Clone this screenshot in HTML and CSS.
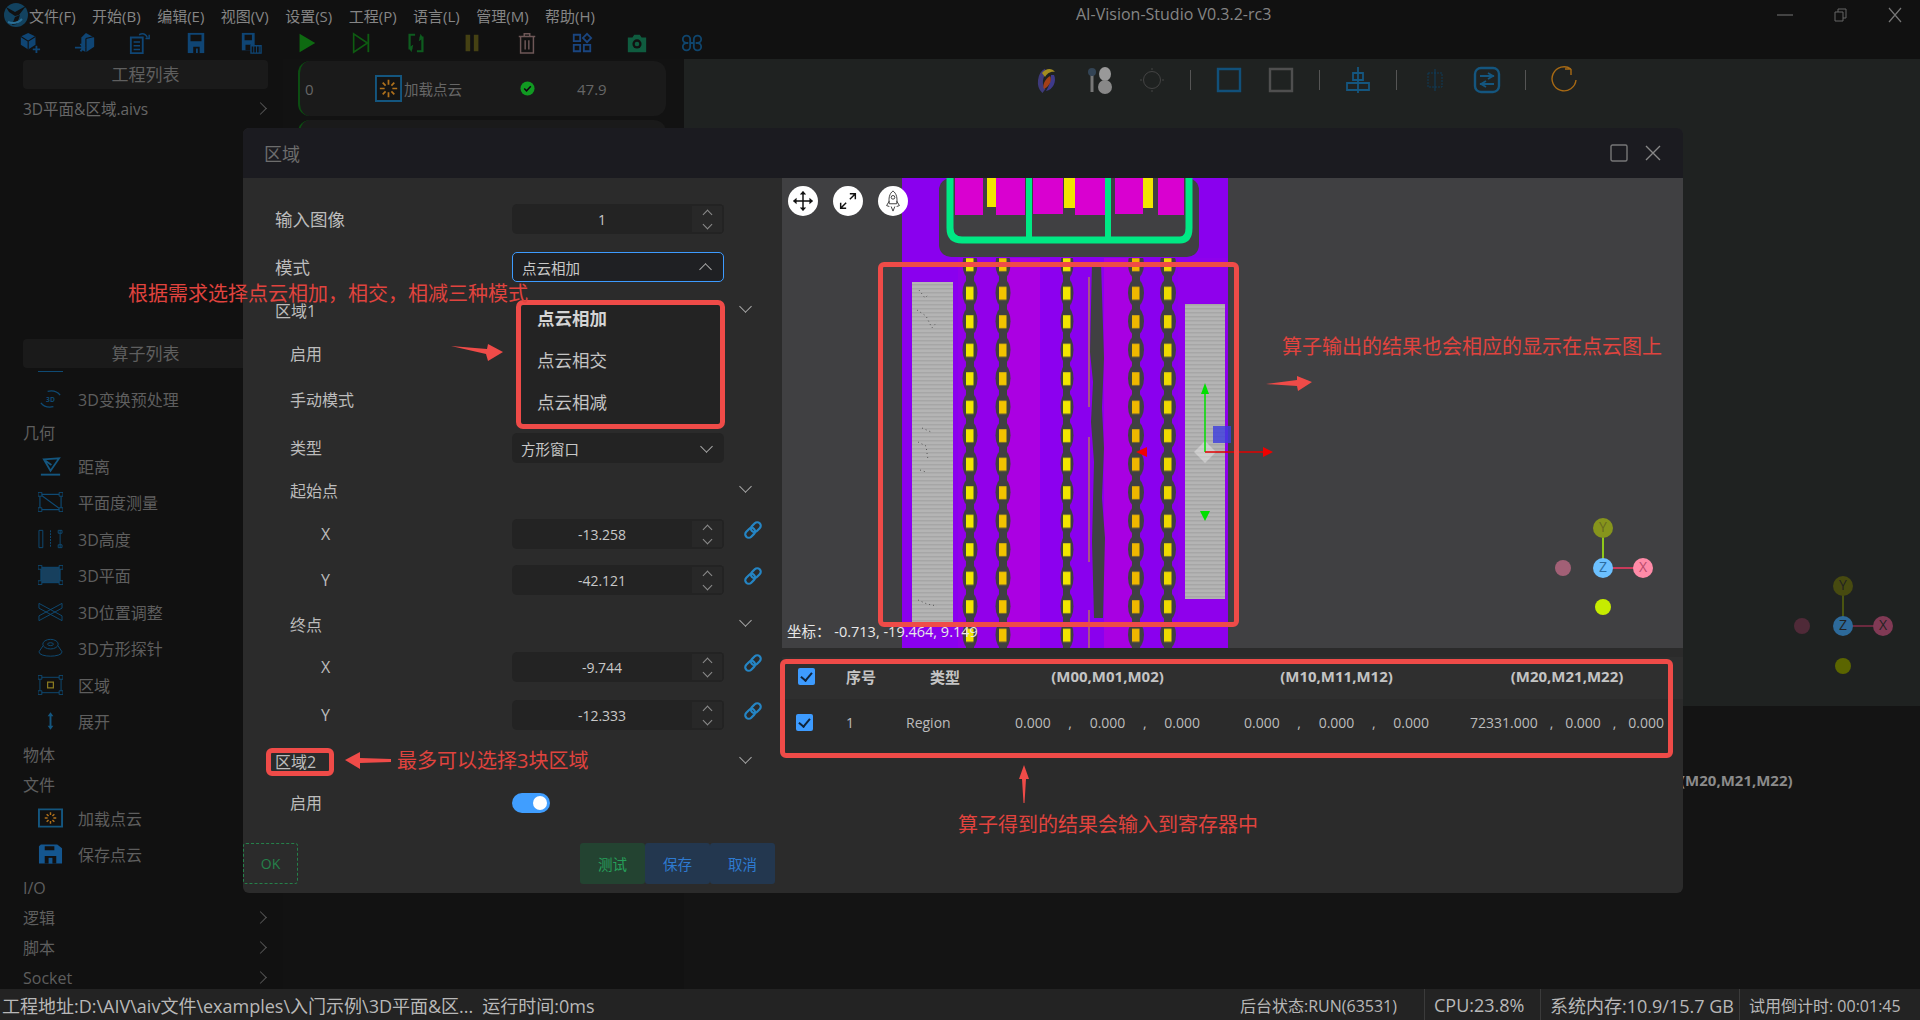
FILE: index.html
```html
<!DOCTYPE html>
<html lang="zh">
<head>
<meta charset="utf-8">
<title>AI-Vision-Studio</title>
<link rel="stylesheet" href="styles.css">
</head>
<body>
<div class="app">
  <header class="titlebar">
    <svg class="logo" viewBox="0 0 26 26"><circle cx="13" cy="13" r="12" fill="#12425f"/><path d="M3 5l9 5 11-6-7 9-4 1-6-4zM12 15l5-2-3 9-5 1z" fill="#111"/><path d="M5 20c5 2 10 1 14-3" stroke="#2a6f96" stroke-width="2" fill="none"/></svg>
    <nav class="menu"><span>文件(F)</span><span>开始(B)</span><span>编辑(E)</span><span>视图(V)</span><span>设置(S)</span><span>工程(P)</span><span>语言(L)</span><span>管理(M)</span><span>帮助(H)</span></nav>
    <div class="apptitle">AI-Vision-Studio V0.3.2-rc3</div>
    <div class="winctl">
      <svg viewBox="0 0 16 16"><path d="M0 8h16" stroke="#666" stroke-width="1.2"/></svg>
      <svg viewBox="0 0 16 16"><path d="M3 5h8v9H3zM6 5V2h8v9h-3" stroke="#666" fill="none"/></svg>
      <svg viewBox="0 0 16 16"><path d="M2 1l12 14M14 1L2 15" stroke="#777" stroke-width="1.2"/></svg>
    </div>
  </header>
  <div class="toolbar">
    <svg viewBox="0 0 24 24"><path d="M10 1l8 4v9l-8 5-8-5V5z" fill="#0f4f86"/><path d="M2 5l8 5 8-5M10 10v9" stroke="#111" stroke-width="1.2" fill="none"/><path d="M19 15v8M15 19h8" stroke="#0f4f86" stroke-width="2"/></svg>
    <svg viewBox="0 0 24 24"><path d="M13 1l9 5v10l-9 6-5-3V6z" fill="#0f4f86"/><path d="M13 7v15M13 7l9-2" stroke="#111" stroke-width="1.2"/><path d="M1 17h9M7 13l4 4-4 4" stroke="#0f4f86" stroke-width="2" fill="none"/></svg>
    <svg viewBox="0 0 24 24"><path d="M2 6h13v17H2z" stroke="#0f4f86" stroke-width="2" fill="none"/><path d="M5 11h7M5 15h7M5 19h7" stroke="#0f4f86" stroke-width="1.6"/><path d="M11 3c4-2 7-1 9 3M22 3v4h-4" stroke="#0f4f86" stroke-width="1.6" fill="none"/></svg>
    <svg viewBox="0 0 24 24"><path d="M3 1h18v22H3z" fill="#0f4f86"/><path d="M6 3h12v7H6zM9 16h7v7H9z" fill="#111"/><path d="M12 18h2v5h-2z" fill="#0f4f86"/></svg>
    <svg viewBox="0 0 24 24"><path d="M2 1h14v19H2z" fill="#0f4f86"/><path d="M5 3h8v6H5zM6 14h6v6H6z" fill="#111"/><path d="M12 15h11v8H12z" fill="#111" stroke="#0f4f86" stroke-width="1.5"/><path d="M15 15v8M18 15v8M21 15v8" stroke="#0f4f86"/></svg>
    <svg viewBox="0 0 24 24"><path d="M5 2l17 10L5 22z" fill="#0e7a12"/></svg>
    <svg viewBox="0 0 24 24"><path d="M4 2l15 10L4 22z" stroke="#0e6a12" stroke-width="1.8" fill="none"/><path d="M20 2v20" stroke="#0e6a12" stroke-width="2"/></svg>
    <svg viewBox="0 0 24 24"><path d="M11 3H5v15h3M13 21h6V6h-3" stroke="#0e6a22" stroke-width="2.4" fill="none"/><path d="M9 14l-2 8-3-5zM15 10l2-8 3 5z" fill="#0e6a22"/></svg>
    <svg viewBox="0 0 24 24"><path d="M5 3h5v18H5zM14 3h5v18h-5z" fill="#4f4a14"/></svg>
    <svg viewBox="0 0 24 24"><path d="M3 5h18M9 5V2h6v3M5 5v18h14V5M10 9v10M14 9v10" stroke="#7f6464" stroke-width="1.6" fill="none"/></svg>
    <svg viewBox="0 0 24 24"><path d="M3 3h7v7H3zM3 14h7v7H3zM14 14h7v7h-7zM17.500 2l4.500 4.500-4.500 4.500-4.500-4.500z" stroke="#1c4f94" stroke-width="2" fill="none"/></svg>
    <svg viewBox="0 0 24 24"><path d="M2 6h5l2-3h6l2 3h5v16H2z" fill="#0f6a48"/><circle cx="12" cy="13" r="5" fill="#111"/><circle cx="12" cy="13" r="2.500" fill="#0f6a48"/></svg>
    <svg viewBox="0 0 24 24" fill="none" stroke="#0f4f7e" stroke-width="2"><path d="M8 12H6a4 4 0 1 1 4-4v8a4 4 0 1 1-4-4M16 12h2a4 4 0 1 0-4-4v8a4 4 0 1 0 4-4zM10 12h4"/></svg>
  </div>
  <main class="workspace">
    <aside class="sidebar">
      <section class="projects">
        <div class="panelhead">工程列表</div>
        <div class="project"><span>3D平面&amp;区域.aivs</span><i class="chev-right"></i></div>
      </section>
      <div class="panelhead">算子列表</div>
      <div class="oplist">
        <div class="sliver"></div>
        <div class="op"><svg viewBox="0 0 26 20"><path d="M3 14c3 4 8 5 13 4M23 6c-3-4-8-5-13-4" stroke="#0f4a73" stroke-width="1.4" fill="none"/><text x="13" y="13" class="icontext">3D</text></svg><span>3D变换预处理</span></div>
        <div class="grp">几何</div>
        <div class="op"><svg viewBox="0 0 26 20"><path d="M6 3l16-1-9 13zM7 4l7 5" stroke="#14567f" stroke-width="1.8" fill="none"/><path d="M3 19h20" stroke="#14567f" stroke-width="2"/></svg><span>距离</span></div>
        <div class="op"><svg viewBox="0 0 26 20"><path d="M2 2h22v16H2zM2 2l22 16" stroke="#0f4a73" stroke-width="1.2" fill="none"/><path d="M0 0h4v4H0zM22 0h4v4h-4zM0 16h4v4H0zM22 16h4v4h-4z" fill="#111" stroke="#0f4a73"/></svg><span>平面度测量</span></div>
        <div class="op"><svg viewBox="0 0 26 20"><path d="M1 1h4v18H1z" stroke="#0f4a73" fill="none"/><path d="M13 1v18" stroke="#0f4a73" stroke-dasharray="2 1"/><path d="M23 1v18M21 1h4v3h-4zM21 16h4v3h-4z" stroke="#0f4a73" fill="#111"/></svg><span>3D高度</span></div>
        <div class="op"><svg viewBox="0 0 26 20"><path d="M3 2h20v16H3z" fill="#17405e" stroke="#0f4a73"/><path d="M0 0h4v4H0zM22 0h4v4h-4zM0 16h4v4H0zM22 16h4v4h-4z" fill="#111" stroke="#0f4a73"/></svg><span>3D平面</span></div>
        <div class="op"><svg viewBox="0 0 26 20"><path d="M1 1l24 13v5L1 6zM25 1L1 14v5L25 6z" stroke="#0f4a73" fill="none"/></svg><span>3D位置调整</span></div>
        <div class="op"><svg viewBox="0 0 26 20"><ellipse cx="13" cy="6" rx="8" ry="5" stroke="#0f4a73" fill="none"/><ellipse cx="13" cy="6" rx="3" ry="1.500" stroke="#0f4a73" fill="none"/><path d="M5 8l-4 6c0 6 24 6 24 0l-4-6" stroke="#0f4a73" fill="none"/></svg><span>3D方形探针</span></div>
        <div class="op"><svg viewBox="0 0 26 20"><path d="M2 2h22v16H2z" stroke="#0f4a73" fill="none"/><path d="M0 0h4v4H0zM22 0h4v4h-4zM0 16h4v4H0zM22 16h4v4h-4z" fill="#111" stroke="#0f4a73"/><path d="M10 7h6v6h-6z" stroke="#8a7a20" stroke-width="1.300" fill="none"/></svg><span>区域</span></div>
        <div class="op"><svg viewBox="0 0 26 20"><path d="M13 1l3 4h-6zM13 19l3-4h-6z" fill="#14567f"/><path d="M13 4v12" stroke="#14567f" stroke-width="2"/></svg><span>展开</span></div>
        <div class="grp">物体</div>
        <div class="grp">文件</div>
        <div class="op"><svg viewBox="0 0 26 20"><path d="M1 1h24v18H1z" stroke="#14567f" stroke-width="2" fill="none"/><path d="M13 4v3M13 13v3M7 10h3M16 10h3M9 6l2 2M17 6l-2 2M9 14l2-2M17 14l-2-2" stroke="#b0711c" stroke-width="1.500"/></svg><span>加载点云</span></div>
        <div class="op"><svg viewBox="0 0 26 20"><path d="M3 0h17l5 4v16H1V2z" fill="#14568f"/><path d="M7 2h10v4H7zM7 12h12v8H7z" fill="#111"/><path d="M11 14h4v6h-4z" fill="#14568f"/></svg><span>保存点云</span></div>
        <div class="grp">I/O</div>
        <div class="grp hasmore">逻辑<i class="chev-right"></i></div>
        <div class="grp hasmore">脚本<i class="chev-right"></i></div>
        <div class="grp hasmore">Socket<i class="chev-right"></i></div>
      </div>
    </aside>
    <section class="tasks">
      <div class="card">
        <span class="card-no">0</span>
        <svg class="card-icon" viewBox="0 0 28 28"><path d="M1 1h26v26H1z" stroke="#14567f" stroke-width="2" fill="#141414"/><path d="M14 5v5M14 18v5M5 14h5M18 14h5M8 8l3 3M20 8l-3 3M8 20l3-3M20 20l-3-3" stroke="#b0711c" stroke-width="1.800"/></svg>
        <span class="card-name">加载点云</span>
        <svg class="card-ok" viewBox="0 0 16 16"><circle cx="8" cy="8" r="7.500" fill="#119a22"/><path d="M4.500 8l2.500 2.500 4.500-5" stroke="#101" stroke-width="1.600" fill="none"/></svg>
        <span class="card-time">47.9</span>
      </div>
      <div class="card"></div>
    </section>
    <section class="stage">
      <div class="stage-top">
        <svg viewBox="0 0 28 28"><path d="M10 25C4 20 6 8 12 5" stroke="#3e3a7a" stroke-width="5" fill="none"/><path d="M8 7c4-5 10-5 13-1-5-1-8 2-10 5" fill="#a48d20"/><path d="M20 9c3 6-1 15-8 16 3-5 5-10 5-16z" fill="#3e3a8a"/><path d="M16 10c2 4 0 10-6 13-2-4 1-10 6-13z" fill="#a33f18"/></svg>
        <svg viewBox="0 0 28 28"><path d="M6 8v18" stroke="#777" stroke-width="3"/><circle cx="6" cy="6" r="4" fill="#345"/><ellipse cx="19" cy="8" rx="6" ry="7" fill="#999"/><ellipse cx="19" cy="21" rx="7" ry="7" fill="#888"/></svg>
        <svg viewBox="0 0 28 28"><circle cx="14" cy="14" r="8.500" stroke="#444" fill="none"/><path d="M14 2v2M14 24v2M2 14h2M24 14h2" stroke="#444"/></svg>
        <i class="sep"></i>
        <svg viewBox="0 0 28 28"><path d="M3 3h22v22H3z" stroke="#11507a" stroke-width="2.400" fill="none"/></svg>
        <svg viewBox="0 0 28 28"><path d="M3 3h22v22H3z" stroke="#4f4f4f" stroke-width="2.400" fill="none"/></svg>
        <i class="sep"></i>
        <svg viewBox="0 0 28 28"><path d="M14 1v26M9 7h10v7H9zM3 17h22v7H3z" stroke="#14567f" stroke-width="1.800" fill="none"/></svg>
        <i class="sep"></i>
        <svg viewBox="0 0 28 28"><path d="M7 7h14v14H7z" stroke="#0f3a58" stroke-dasharray="2 1" fill="none"/><path d="M14 3v22" stroke="#0f3f60"/></svg>
        <svg viewBox="0 0 28 28"><rect x="2" y="2" width="24" height="24" rx="6" stroke="#14567f" stroke-width="2.400" fill="none"/><path d="M7 10h14M15 7l5 3-5 3M21 18H7M13 15l-5 3 5 3" stroke="#14567f" stroke-width="1.800" fill="none"/></svg>
        <i class="sep"></i>
        <svg viewBox="0 0 28 28"><path d="M21 3A12 12 0 1 0 26 14M21 3v6M21 3h-6" stroke="#a86a14" stroke-width="1.400" fill="none"/></svg>
      </div>
      <div class="stage-bottom"><span class="bottom-head">(M20,M21,M22)</span></div>
      <svg class="bg-gizmo" viewBox="0 0 120 100">
        <path d="M61 50V10" stroke="#4a5510" stroke-width="2"/><path d="M61 50h40" stroke="#6b2a3f" stroke-width="2"/>
        <circle cx="20" cy="50" r="8" fill="#4f2a38"/><circle cx="61" cy="90" r="8" fill="#5b6500"/>
        <circle cx="61" cy="10" r="10" fill="#474a10"/><circle cx="101" cy="50" r="10" fill="#813a55"/><circle cx="61" cy="50" r="10" fill="#2d6a9a"/>
        <text x="61" y="14" class="gz dim">Y</text><text x="101" y="54" class="gz dim">X</text><text x="61" y="54" class="gz dim">Z</text>
      </svg>
    </section>
  </main>
  <footer class="statusbar">
    <div class="status-left"><span>工程地址:D:\AIV\aiv文件\examples\入门示例\3D平面&amp;区...</span><span>运行时间:0ms</span></div>
    <div class="status-right"><span class="s1">后台状态:RUN(63531)</span><span class="s2">CPU:23.8%</span><span class="s3">系统内存:10.9/15.7 GB</span><span class="s4">试用倒计时: 00:01:45</span></div>
  </footer>
</div>

<div class="modal">
  <div class="modal-head">
    <span class="modal-title">区域</span>
    <div class="modal-ctl">
      <svg viewBox="0 0 18 18"><rect x="1" y="1" width="16" height="16" rx="1.500" stroke="#777" stroke-width="1.400" fill="none"/></svg>
      <svg viewBox="0 0 18 18"><path d="M2 2l14 14M16 2L2 16" stroke="#888" stroke-width="1.400"/></svg>
    </div>
  </div>
  <div class="modal-body">
    <div class="form">
      <div class="fields">
        <label class="lab big">输入图像</label><div class="num"><span>1</span><b class="spin"></b></div><i></i>
        <label class="lab big">模式</label><div class="sel open"><span>点云相加</span><i class="chev up"></i></div><i></i>
        <label class="lab">区域1</label><i></i><i class="chev secchev"></i>
        <label class="lab sub">启用</label><i></i><i></i>
        <label class="lab sub">手动模式</label><i></i><i></i>
        <label class="lab sub">类型</label><div class="sel"><span>方形窗口</span><i class="chev"></i></div><i></i>
        <label class="lab sub">起始点</label><i></i><i class="chev secchev"></i>
        <label class="lab sub2">X</label><div class="num"><span>-13.258</span><b class="spin"></b></div><svg class="link" viewBox="0 0 20 20"><g transform="rotate(-45 10 10)" fill="none" stroke="#2585c4" stroke-width="2.200"><rect x="0.500" y="6.500" width="11" height="7" rx="3.500"/><rect x="8.500" y="6.500" width="11" height="7" rx="3.500"/></g></svg>
        <label class="lab sub2">Y</label><div class="num"><span>-42.121</span><b class="spin"></b></div><svg class="link" viewBox="0 0 20 20"><g transform="rotate(-45 10 10)" fill="none" stroke="#2585c4" stroke-width="2.200"><rect x="0.500" y="6.500" width="11" height="7" rx="3.500"/><rect x="8.500" y="6.500" width="11" height="7" rx="3.500"/></g></svg>
        <label class="lab sub">终点</label><i></i><i class="chev secchev"></i>
        <label class="lab sub2">X</label><div class="num"><span>-9.744</span><b class="spin"></b></div><svg class="link" viewBox="0 0 20 20"><g transform="rotate(-45 10 10)" fill="none" stroke="#2585c4" stroke-width="2.200"><rect x="0.500" y="6.500" width="11" height="7" rx="3.500"/><rect x="8.500" y="6.500" width="11" height="7" rx="3.500"/></g></svg>
        <label class="lab sub2">Y</label><div class="num"><span>-12.333</span><b class="spin"></b></div><svg class="link" viewBox="0 0 20 20"><g transform="rotate(-45 10 10)" fill="none" stroke="#2585c4" stroke-width="2.200"><rect x="0.500" y="6.500" width="11" height="7" rx="3.500"/><rect x="8.500" y="6.500" width="11" height="7" rx="3.500"/></g></svg>
        <label class="lab">区域2</label><i></i><i class="chev secchev"></i>
        <label class="lab sub">启用</label><div class="toggle"><i></i></div><i></i>
      </div>
      <div class="actions">
        <span class="ok">OK</span>
        <div class="btns"><button class="b-test">测试</button><button class="b-save">保存</button><button class="b-cancel">取消</button></div>
      </div>
    </div>
    <div class="result">
      <div class="viewer">
        <svg class="cloud" viewBox="782 178 901 470">
          <defs>
            <pattern id="stripes" width="4" height="4" patternUnits="userSpaceOnUse"><rect width="4" height="4" fill="#b4b4b4"/><rect width="4" height="1.500" fill="#a6a6a6"/></pattern>
            <pattern id="pads" x="902" y="278.750" width="326" height="28.500" patternUnits="userSpaceOnUse">
              <g fill="#404042"><rect x="64" y="0" width="8" height="29"/><ellipse cx="68" cy="14" rx="7.500" ry="14.250"/><rect x="97" y="0" width="8" height="29"/><ellipse cx="101" cy="14" rx="7.500" ry="14.250"/><rect x="161" y="0" width="7" height="29"/><ellipse cx="165" cy="14" rx="6.500" ry="14.250"/><rect x="230" y="0" width="8" height="29"/><ellipse cx="234" cy="14" rx="8" ry="14.250"/><rect x="262" y="0" width="8" height="29"/><ellipse cx="266" cy="14" rx="8" ry="14.250"/></g>
              <rect x="64" y="8" width="7.500" height="13" fill="#f2e600"/><rect x="97" y="8" width="7.500" height="13" fill="#f1c400"/><rect x="161" y="8" width="7.500" height="13" fill="#f2e600"/><rect x="230" y="8" width="7.500" height="13" fill="#efb700"/><rect x="262" y="8" width="7.500" height="13" fill="#eeda00"/>
            </pattern>
          </defs>
          <rect x="902" y="178" width="326" height="470" fill="#8a00ee"/>
          <rect x="958" y="258" width="40" height="390" fill="#9200ea"/>
          <rect x="1007" y="258" width="33" height="390" fill="#ab00e2"/>
          <rect x="1040" y="258" width="24" height="390" fill="#8c00ef"/>
          <rect x="1104" y="258" width="28" height="390" fill="#a800e2"/>
          <rect x="1178" y="258" width="50" height="390" fill="#8f00ec"/>
          <rect x="939" y="178" width="260" height="79" rx="12" fill="#404042"/>
          <g fill="#d900d0"><rect x="955" y="178" width="28" height="37"/><rect x="996" y="178" width="29" height="37"/><rect x="1033" y="178" width="30" height="36"/><rect x="1075" y="178" width="31" height="37"/><rect x="1115" y="178" width="28" height="36"/><rect x="1158" y="178" width="26" height="37"/></g>
          <g fill="#f2e600"><rect x="987" y="178" width="9" height="29"/><rect x="1064" y="178" width="11" height="30"/><rect x="1143" y="178" width="10" height="30"/></g>
          <path d="M950 178v50q0 12 12 12h218q9 0 9-12v-50" stroke="#00e884" stroke-width="7" fill="none"/>
          <path d="M1029 178v60M1108 178v60" stroke="#00e884" stroke-width="6"/>
          <rect x="902" y="258" width="326" height="390" fill="url(#pads)"/>
          <path d="M1092 262l-2 90 3 30-2 40 3 40-2 80 2 76h9l2-80-3-40 2-50-2-40 2-50-3-96z" fill="#404042"/>
          <path d="M1089 277v130M1089 437v125M1089 610v38" stroke="#c8a820" stroke-width="1"/>
          <rect x="912" y="282" width="41" height="341" fill="url(#stripes)"/>
          <rect x="1185" y="304" width="40" height="295" fill="url(#stripes)"/>
          <g stroke="#555" stroke-width="1" fill="none" stroke-dasharray="1 3"><path d="M919 290l6 8 4-4M917 310l9 6 6 12 5-6M922 428l9 4M918 442l8 4 2 14M920 470l6 2M918 600l9 4 10 2"/></g>
          <path d="M1194 452l11-11 11 11-11 11z" fill="#fff" opacity=".35"/>
          <rect x="1213" y="426" width="18" height="17" fill="#3c3cde" opacity=".8"/>
          <path d="M1205 452v-62" stroke="#00e000" stroke-width="1.500"/><path d="M1205 383l4 11h-8zM1205 521l-5-10h10z" fill="#00e000"/>
          <path d="M1205 452h62" stroke="#e00000" stroke-width="1.500"/><path d="M1273 452l-10 5v-10zM1136 452l11-5v10z" fill="#f00000"/>
          <path d="M1603 568V528" stroke="#8fc81a" stroke-width="2"/><path d="M1603 568h40" stroke="#c83a5a" stroke-width="2"/>
          <circle cx="1563" cy="568" r="8" fill="#a26076"/><circle cx="1603" cy="607" r="8" fill="#c6ec00"/>
          <circle cx="1603" cy="528" r="10" fill="#86941c"/><circle cx="1643" cy="568" r="10" fill="#ff8ba8"/><circle cx="1603" cy="568" r="10" fill="#6cc0ff"/>
          <text x="1603" y="532" class="gz">Y</text><text x="1643" y="572" class="gz xlab">X</text><text x="1603" y="572" class="gz zlab">Z</text>
        </svg>
        <div class="view-tools">
          <span><svg viewBox="0 0 24 24"><path d="M12 2v20M2 12h20" stroke="#111" stroke-width="1.600"/><path d="M12 1l-3.500 4h7zM12 23l-3.500-4h7zM1 12l4-3.500v7zM23 12l-4-3.500v7z" fill="#111"/></svg></span>
          <span><svg viewBox="0 0 24 24"><path d="M4 20L10 14M14 10l6-6M14 4h6v6M4 14v6h6" stroke="#111" stroke-width="1.600" fill="none"/></svg></span>
          <span><svg viewBox="0 0 24 24"><path d="M12 1c4 3 5 8 4 14H8C7 9 8 4 12 1zM8 12l-3 5 3 1M16 12l3 5-3 1M10 18l2 5 2-5" stroke="#333" stroke-width="1" fill="none"/><circle cx="12" cy="8" r="2" stroke="#333" fill="none"/></svg></span>
        </div>
        <div class="coords">坐标： -0.713, -19.464, 9.149</div>
      </div>
      <div class="rtable">
        <div class="trow thead">
          <b class="check"></b><span>序号</span><span class="type-h">类型</span><span class="grp-h g1">(M00,M01,M02)</span><span class="grp-h g2">(M10,M11,M12)</span><span class="grp-h">(M20,M21,M22)</span>
        </div>
        <div class="trow tbody">
          <b class="check"></b><span>1</span><span>Region</span>
          <div class="vals g1"><span>0.000</span><span>,</span><span>0.000</span><span>,</span><span>0.000</span></div>
          <div class="vals g2"><span>0.000</span><span>,</span><span>0.000</span><span>,</span><span>0.000</span></div>
          <div class="vals"><span>72331.000</span><span>,</span><span>0.000</span><span>,</span><span>0.000</span></div>
        </div>
      </div>
    </div>
  </div>
</div>

<div class="dropdown"><div class="strong">点云相加</div><div>点云相交</div><div>点云相减</div></div>
<div class="redbox box-region"></div>
<div class="redbox box-view"></div>
<div class="redbox box-table"></div>
<div class="note note-mode">根据需求选择点云相加，相交，相减三种模式</div>
<div class="note note-region">最多可以选择3块区域</div>
<div class="note note-view">算子输出的结果也会相应的显示在点云图上</div>
<div class="note note-table">算子得到的结果会输入到寄存器中</div>
<svg class="arrows" viewBox="0 0 1920 1020">
  <path d="M451 346l36 3 1-5 15 8-15 9-2-7zM345 760l15-8 0 6 31 1 0 3-31 1 0 6zM1266 384l31-4 0-4 15 6-14 9-1-5zM1024 765l5 14-3 0-1.500 24-1 0-1.500-24-3 0z" fill="#ef4b48"/>
</svg>
</body>
</html>
```

FILE: styles.css
```css
* { box-sizing: border-box; }
html, body { margin: 0; height: 100%; }
body {
  position: relative;
  width: 1920px;
  height: 1020px;
  overflow: hidden;
  background: #111;
  font-family: "Open Sans", "Noto Sans CJK SC", sans-serif;
  color: #666;
}
i { font-style: normal; }
.app { display: flex; flex-direction: column; height: 1020px; }

.titlebar { position: relative; display: flex; align-items: center; height: 30px; background: #111; }
.logo { width: 26px; height: 26px; margin-left: 3px; flex: none; }
.menu { display: flex; gap: 16.500px; font-size: 15px; color: #858585; white-space: nowrap; }
.apptitle { position: absolute; left: 1076px; top: 3px; font-size: 16px; color: #858585; white-space: nowrap; }
.winctl { display: flex; margin-left: auto; gap: 39px; padding-right: 17px; }
.winctl svg { width: 16px; height: 16px; }

.toolbar { display: flex; align-items: center; gap: 33.200px; height: 29px; padding: 0 0 4px 19px; background: #111; }
.toolbar svg { width: 22px; height: 24px; flex: none; opacity: .85; }

.workspace { flex: 1; display: flex; min-height: 0; }
.sidebar { width: 283px; flex: none; background: #111; padding: 1px 15px 0 23px; display: flex; flex-direction: column; }
.projects { height: 279px; flex: none; }
.panelhead { height: 29px; line-height: 29px; text-align: center; font-size: 17px; color: #5f5f5f; background: #1a1a1a; border-radius: 4px; flex: none; }
.project { display: flex; justify-content: space-between; align-items: center; height: 38px; font-size: 15.500px; color: #666; }
.chev-right { width: 9px; height: 9px; border-top: 1px solid #555; border-right: 1px solid #555; transform: rotate(45deg); margin-right: 3px; }
.oplist { flex: 1; overflow: hidden; padding-top: 13px; position: relative; }
.sliver { position: absolute; left: 15px; top: 0; width: 25px; height: 4px; border-bottom: 1px solid #0f4a73; }
.op { display: flex; align-items: center; height: 36.500px; padding-left: 15px; gap: 15px; font-size: 16px; color: #5e5e5e; white-space: nowrap; }
.op svg { width: 25px; height: 20px; flex: none; }
.icontext { font-size: 7px; font-weight: 700; fill: #0f4a73; text-anchor: middle; }
.grp { height: 30px; line-height: 30px; font-size: 16px; color: #5e5e5e; }
.hasmore { display: flex; justify-content: space-between; align-items: center; }

.tasks { width: 401px; flex: none; background: #121212; padding: 2px 18px 0 15px; }
.card { display: flex; align-items: center; height: 55px; background: #1a1a1a; border-radius: 12px; border-left: 2px solid #0c4d12; margin-bottom: 4px; font-size: 15px; color: #666; }
.card-no { margin-left: 5px; width: 70px; }
.card-icon { width: 27px; height: 27px; flex: none; }
.card-name { margin-left: 2px; width: 116px; font-size: 14.500px; white-space: nowrap; }
.card-ok { width: 15px; height: 15px; flex: none; }
.card-time { margin-left: 42px; }

.stage { flex: 1; position: relative; display: flex; flex-direction: column; }
.stage-top { height: 647px; flex: none; display: flex; align-items: flex-start; gap: 24px; padding: 7px 0 0 350px; background: #1f2221; }
.stage-top svg { width: 28px; height: 28px; flex: none; }
.sep { width: 1px; height: 20px; margin-top: 4px; background: #555; flex: none; }
.stage-bottom { flex: 1; background: #141414; padding: 64px 0 0 1000px; }
.bottom-head { display: block; margin-left: -4px; font-size: 15px; font-weight: 700; color: #8b8b8b; white-space: nowrap; }
.bg-gizmo { position: absolute; left: 1098px; top: 517px; width: 120px; height: 100px; }
.gz { font-size: 14px; text-anchor: middle; fill: #666b20; font-family: "Open Sans", sans-serif; }
.gz.dim { fill: #222; }
.xlab { fill: #b84a6a; }
.zlab { fill: #2c6c9f; }

.statusbar { height: 31px; flex: none; display: flex; justify-content: space-between; align-items: center; background: #232323; color: #b8b8b8; font-size: 18px; white-space: nowrap; }
.status-left { display: flex; gap: 9px; padding-left: 2px; }
.status-right { display: flex; height: 100%; }
.status-right span { display: flex; align-items: center; border-left: 1px solid #3b3b3b; padding-left: 9px; }
.status-right .s1 { border-left: 0; width: 184px; padding-left: 0; font-size: 16px; }
.status-right .s2 { width: 116px; }
.status-right .s3 { width: 199px; }
.status-right .s4 { width: 181px; font-size: 16px; }

.modal { position: absolute; left: 243px; top: 128px; width: 1440px; height: 765px; display: flex; flex-direction: column; border-radius: 6px; overflow: hidden; background: #2b2b2b; color: #bcbcbc; }
.modal-head { height: 50px; flex: none; display: flex; align-items: center; justify-content: space-between; padding: 0 21px; background: #1b1b20; }
.modal-title { font-size: 18px; color: #6d6d6d; }
.modal-ctl { display: flex; gap: 16px; }
.modal-ctl svg { width: 18px; height: 18px; }
.modal-body { flex: 1; display: flex; min-height: 0; }

.form { width: 539px; flex: none; display: flex; flex-direction: column; padding: 26px 7px 9px 0; }
.fields { display: grid; grid-template-columns: 237px 212px 50px; grid-template-rows: 48px 44px 43px 46px 48px 43px 43px 46px 45px 42px 48px 47px 41px 30px; margin-left: 32px; align-items: start; }
.lab { font-size: 16px; line-height: 30px; white-space: nowrap; }
.lab.big { font-size: 17.500px; }
.lab.sub { padding-left: 15px; }
.lab.sub2 { padding-left: 46px; }
.num { position: relative; display: flex; align-items: center; height: 30px; background: #232323; border-radius: 5px; font-size: 14px; color: #c8c8c8; overflow: hidden; }
.num span { width: 180px; text-align: center; }
.spin { position: absolute; right: 0; top: 0; width: 32px; height: 30px; background: #282828; border-right: 2px solid #232323; border-top: 2px solid #232323; border-bottom: 2px solid #232323; }
.spin::before, .spin::after { content: ""; position: absolute; left: 12px; width: 6px; height: 6px; border-left: 1px solid #8c8c8c; border-top: 1px solid #8c8c8c; }
.spin::before { top: 5px; transform: rotate(45deg); }
.spin::after { top: 15px; transform: rotate(225deg); }
.sel { display: flex; align-items: center; justify-content: space-between; height: 30px; padding: 0 13px 0 9px; background: #232323; border-radius: 5px; font-size: 14.500px; color: #c8c8c8; }
.sel.open { border: 1px solid #3d9bff; background: #1f2023; }
.chev { display: block; width: 9px; height: 9px; border-right: 1.300px solid #aaa; border-bottom: 1.300px solid #aaa; transform: translateY(-2px) rotate(45deg); }
.chev.up { transform: translateY(2px) rotate(225deg); }
.secchev { margin: 8px 0 0 17px; }
.link { width: 20px; height: 20px; margin-left: 19px; margin-top: 1px; }
.toggle { display: flex; justify-content: flex-end; align-items: center; width: 38px; height: 20px; margin-top: 5px; padding-right: 3px; border-radius: 10px; background: #409eff; }
.toggle i { width: 14px; height: 14px; border-radius: 50%; background: #fff; }
.actions { margin-top: auto; display: flex; justify-content: space-between; height: 41px; }
.ok { width: 55px; line-height: 39px; text-align: center; font-size: 14px; color: #25804a; border: 1px dashed #25804a; border-radius: 3px; }
.btns { display: flex; }
.btns button { width: 65px; border: 0; border-radius: 3px; font: inherit; font-size: 14.500px; }
.b-test { background: #234331; color: #26a05a; }
.b-save { background: #23374f; color: #2e7ad0; }
.b-cancel { background: #23374f; color: #2e7ad0; }

.result { flex: 1; display: flex; flex-direction: column; min-width: 0; }
.viewer { position: relative; height: 470px; flex: none; background: #404042; }
.cloud { display: block; width: 901px; height: 470px; }
.view-tools { position: absolute; left: 6px; top: 8px; display: flex; gap: 15px; }
.view-tools span { display: flex; align-items: center; justify-content: center; width: 30px; height: 30px; border-radius: 50%; background: #fff; }
.view-tools svg { width: 22px; height: 22px; }
.coords { position: absolute; left: 5px; bottom: 7px; font-size: 14.500px; color: #e8e8e8; white-space: nowrap; }
.rtable { padding-top: 9px; }
.trow { display: grid; grid-template-columns: 64px 60px 109px 229px 226px 194px; align-items: center; font-size: 14px; }
.thead { height: 42px; padding-bottom: 4px; background: #2f2f2f; font-weight: 700; font-size: 15px; color: #c4c4c4; }
.tbody { height: 46px; background: #2b2b2b; color: #bcbcbc; }
.check { position: relative; width: 17px; height: 17px; border-radius: 2px; background: #3d9bff; margin-left: 16px; }
.tbody .check { margin-left: 14px; }
.check::after { content: ""; position: absolute; left: 5px; top: 2px; width: 5px; height: 9px; border-right: 2px solid #10233a; border-bottom: 2px solid #10233a; transform: rotate(40deg); }
.type-h { padding-left: 24px; }
.grp-h { text-align: center; white-space: nowrap; }
.grp-h.g1 { padding-right: 44px; }
.grp-h.g2 { padding-right: 41px; }
.vals { display: flex; justify-content: space-between; }
.vals.g1 { padding-right: 44px; }
.vals.g2 { padding-right: 41px; }

.dropdown { position: absolute; left: 516px; top: 300px; width: 209px; height: 129px; display: flex; flex-direction: column; gap: 16px; padding-left: 16px; background: #232323; border: 5px solid #ef4b48; border-radius: 7px; font-size: 17.500px; line-height: 26px; color: #c4c4c4; }
.strong { font-weight: 700; color: #d4d4d4; }
.redbox { position: absolute; border: 5px solid #ef4b48; border-radius: 6px; }
.box-region { left: 266px; top: 748px; width: 68px; height: 28px; }
.box-view { left: 878px; top: 262px; width: 361px; height: 365px; }
.box-table { left: 780px; top: 659px; width: 893px; height: 99px; }
.note { position: absolute; font-size: 20px; line-height: 28px; color: #e0433e; white-space: nowrap; }
.note-mode { left: 128px; top: 280px; }
.note-region { left: 397px; top: 747px; }
.note-view { left: 1282px; top: 333px; }
.note-table { left: 958px; top: 811px; }
.arrows { position: absolute; left: 0; top: 0; width: 1920px; height: 1020px; pointer-events: none; }
```
